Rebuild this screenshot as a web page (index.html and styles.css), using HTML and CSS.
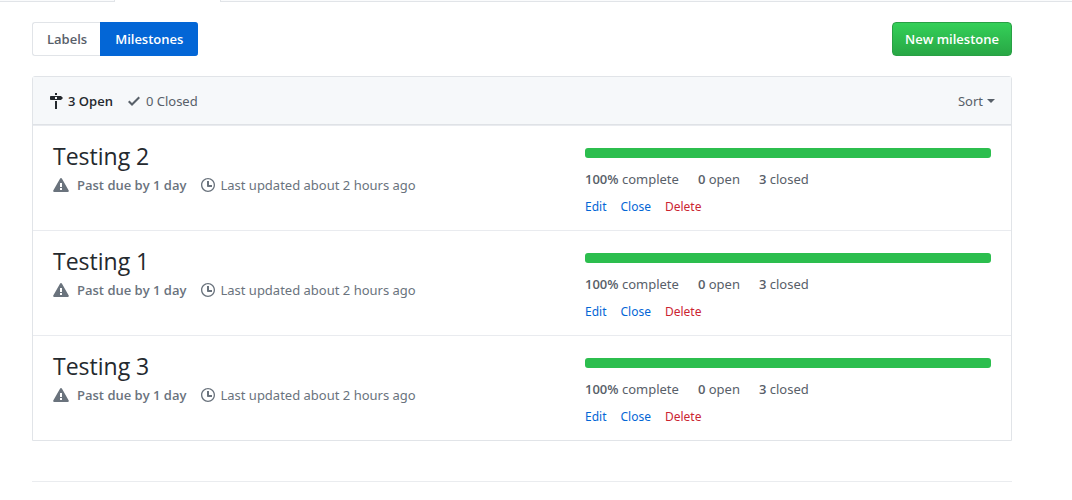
FILE: index.html
```html
<!DOCTYPE html>
<html lang="en">
<head>
<meta charset="utf-8">
<meta name="viewport" content="width=device-width, initial-scale=1">
<title>Milestones</title>
<link rel="stylesheet" href="styles.css">
</head>
<body>
<svg class="sprite" aria-hidden="true">
  <symbol id="milestone" viewBox="0 0 14 16"><path fill-rule="evenodd" d="M8 2H6V0h2v2zm4 5H2c-.55 0-1-.45-1-1V4c0-.55.45-1 1-1h10l2 2-2 2zM8 4H6v2h2V4zM6 16h2V8H6v8z"/></symbol>
  <symbol id="check" viewBox="0 0 12 16"><path fill-rule="evenodd" d="M12 5l-8 8-4-4 1.500-1.500L4 10l6.500-6.500z"/></symbol>
  <symbol id="alert" viewBox="0 0 16 16"><path fill-rule="evenodd" d="M8.865 1.520c-.18-.31-.51-.5-.87-.5s-.69.190-.87.500L.275 13.500c-.18.310-.18.690 0 1 .19.310.52.500.87.500h13.700c.36 0 .69-.19.860-.5.170-.31.180-.69.010-1L8.865 1.520zM8.995 13h-2v-2h2v2zm0-3h-2V6h2v4z"/></symbol>
  <symbol id="clock" viewBox="0 0 14 16"><path fill-rule="evenodd" d="M8 8h3v2H7c-.55 0-1-.45-1-1V4h2v4zM7 2.300c3.140 0 5.700 2.560 5.700 5.700s-2.560 5.700-5.700 5.700A5.710 5.710 0 0 1 1.300 8c0-3.140 2.560-5.700 5.700-5.700zM7 1C3.140 1 0 4.140 0 8s3.140 7 7 7 7-3.140 7-7-3.140-7-7-7z"/></symbol>
</svg>
<div class="tabs"><span class="tabs-before"></span><span class="tabs-selected"></span><span class="tabs-after"></span></div>
<main class="container">
  <div class="toolbar">
    <nav class="subnav">
      <a class="subnav-item" href="#labels">Labels</a>
      <a class="subnav-item selected" href="#milestones" aria-current="page">Milestones</a>
    </nav>
    <button class="btn-primary" type="button">New milestone</button>
  </div>
  <div class="box">
    <div class="box-header">
      <div class="states">
        <a class="state selected" href="#open"><svg class="icon milestone"><use href="#milestone"/></svg>3 Open</a>
        <a class="state" href="#closed"><svg class="icon check"><use href="#check"/></svg>0 Closed</a>
      </div>
      <button class="sort" type="button">Sort</button>
    </div>
    <ul class="milestones">
      <li class="milestone-row">
        <div>
          <h2 class="title"><a href="#m2">Testing 2</a></h2>
          <div class="meta">
            <span class="due"><svg class="icon alert"><use href="#alert"/></svg>Past due by 1 day</span>
            <span class="updated"><svg class="icon clock"><use href="#clock"/></svg>Last updated about 2 hours ago</span>
          </div>
        </div>
        <div class="progress">
          <div class="bar"><span class="fill" style="width: 100%"></span></div>
          <div class="stats"><span><b>100%</b> complete</span><span><b>0</b> open</span><span><b>3</b> closed</span></div>
          <div class="actions"><a href="#edit2">Edit</a><button type="button">Close</button><button class="danger" type="button">Delete</button></div>
        </div>
      </li>
      <li class="milestone-row">
        <div>
          <h2 class="title"><a href="#m1">Testing 1</a></h2>
          <div class="meta">
            <span class="due"><svg class="icon alert"><use href="#alert"/></svg>Past due by 1 day</span>
            <span class="updated"><svg class="icon clock"><use href="#clock"/></svg>Last updated about 2 hours ago</span>
          </div>
        </div>
        <div class="progress">
          <div class="bar"><span class="fill" style="width: 100%"></span></div>
          <div class="stats"><span><b>100%</b> complete</span><span><b>0</b> open</span><span><b>3</b> closed</span></div>
          <div class="actions"><a href="#edit1">Edit</a><button type="button">Close</button><button class="danger" type="button">Delete</button></div>
        </div>
      </li>
      <li class="milestone-row">
        <div>
          <h2 class="title"><a href="#m3">Testing 3</a></h2>
          <div class="meta">
            <span class="due"><svg class="icon alert"><use href="#alert"/></svg>Past due by 1 day</span>
            <span class="updated"><svg class="icon clock"><use href="#clock"/></svg>Last updated about 2 hours ago</span>
          </div>
        </div>
        <div class="progress">
          <div class="bar"><span class="fill" style="width: 100%"></span></div>
          <div class="stats"><span><b>100%</b> complete</span><span><b>0</b> open</span><span><b>3</b> closed</span></div>
          <div class="actions"><a href="#edit3">Edit</a><button type="button">Close</button><button class="danger" type="button">Delete</button></div>
        </div>
      </li>
    </ul>
  </div>
  <footer class="footer"></footer>
</main>
</body>
</html>
```
FILE: styles.css
```css
* { box-sizing: border-box; }
body {
  margin: 0;
  background: #fff;
  color: #586069;
  font: 13px/20px "Noto Sans", "Open Sans", sans-serif;
}
a { color: inherit; text-decoration: none; }
button { margin: 0; padding: 0; border: 0; background: none; color: inherit; font: inherit; cursor: pointer; }
.sprite { display: none; }
.icon { flex: none; height: 16px; fill: currentColor; }
.icon.milestone, .icon.clock { width: 14px; }
.icon.check { width: 12px; }
.icon.alert { width: 16px; }

.tabs { display: flex; height: 2px; }
.tabs-before, .tabs-after { background: #fafbfc; border-bottom: 1px solid #e1e4e8; }
.tabs-before { width: 115px; border-right: 1px solid #e1e4e8; }
.tabs-selected { width: 105px; }
.tabs-after { flex: 1; border-left: 1px solid #e1e4e8; }

.container { max-width: 1040px; padding: 20px 28px 0 32px; }
.toolbar { display: flex; justify-content: space-between; margin-bottom: 20px; }
.subnav, .btn-primary, .state.selected, .due, .stats b { font-family: "Open Sans", "Noto Sans", sans-serif; font-weight: 600; }
.subnav { display: flex; }
.subnav-item { padding: 6px 13px 6px 14px; border: 1px solid #e1e4e8; border-right: 0; border-radius: 3px 0 0 3px; }
.subnav-item.selected { padding: 6px 15px 6px 14px; border-color: #0366d6; border-radius: 0 3px 3px 0; background: #0366d6; color: #fff; }
.btn-primary {
  padding: 6px 12px;
  border: 1px solid #28a044;
  border-radius: 4px;
  background: linear-gradient(#34d058, #28a745);
  color: #fff;
}

.box { border: 1px solid #e1e4e8; border-radius: 3px 3px 0 0; }
.box-header {
  display: flex;
  justify-content: space-between;
  padding: 14px 16px 13px;
  border-bottom: 1px solid #dfe2e6;
  background: #f6f8fa;
}
.states { display: flex; gap: 15px; }
.state { display: flex; align-items: center; gap: 6px; }
.state.selected { gap: 5px; color: #24292e; }
.sort { display: flex; align-items: center; gap: 4px; }
.sort::after { content: ""; border: 4px solid transparent; border-top-color: currentColor; border-bottom: 0; }

.milestones { margin: 0; padding: 0; list-style: none; }
.milestone-row {
  display: grid;
  grid-template-columns: 1fr 406px;
  padding: 16px 20px 13px;
  border-top: 1px solid #e9ebef;
}
.title { margin: 0; color: #24292e; font-family: "Open Sans", "Noto Sans", sans-serif; font-size: 23px; font-weight: 400; line-height: 28px; }
.meta { display: flex; gap: 15px; margin-top: 5px; color: #6a737d; }
.due, .updated { display: flex; align-items: center; }
.due { gap: 8px; }
.updated { gap: 5px; }
.bar { height: 10px; margin: 6px 0 11px; border-radius: 3px; background: #eff1f3; overflow: hidden; }
.fill { display: block; height: 100%; background: #2cbe4e; }
.stats { display: flex; gap: 19px; }
.actions { display: flex; gap: 14px; margin-top: 8px; color: #0366d6; font-size: 12px; }
.danger { color: #cb2431; }

.footer { margin-top: 40px; border-top: 1px solid #eaecef; }
```
